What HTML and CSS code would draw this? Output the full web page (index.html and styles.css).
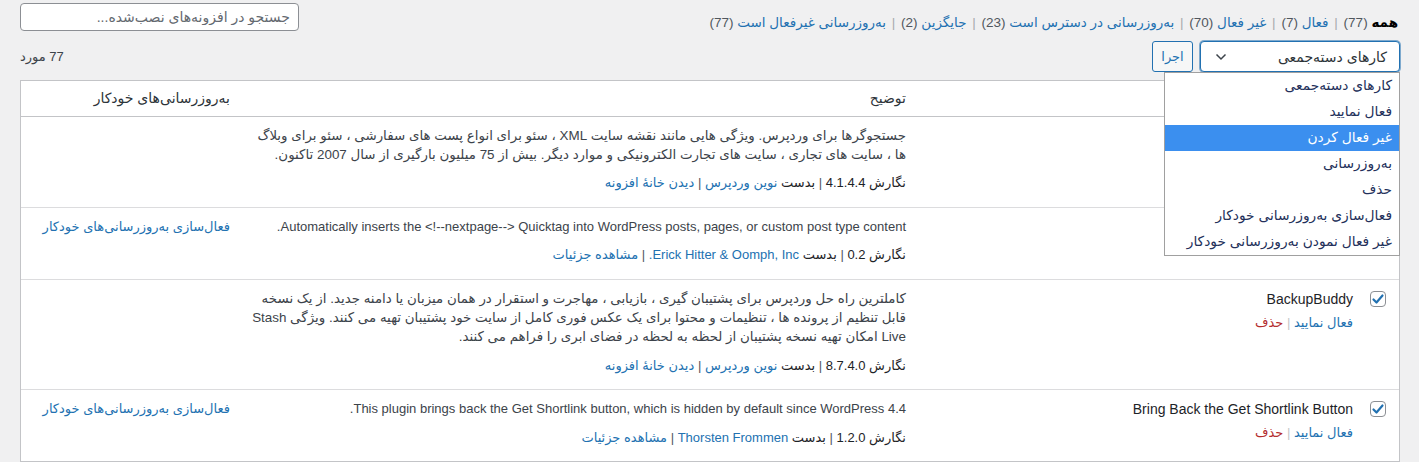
FILE: index.html
```html
<!DOCTYPE html>
<html lang="fa" dir="rtl">
<head>
<meta charset="utf-8">
<title>افزونه‌ها</title>
<link rel="stylesheet" href="styles.css">
</head>
<body>
<div class="wrap">
  <div class="top">
    <ul class="subsubsub">
      <li><span class="current">همه</span> <span class="count">(77)</span> <span class="sep">|</span> </li>
      <li><a href="#">فعال <span class="count">(7)</span></a> <span class="sep">|</span> </li>
      <li><a href="#">غیر فعال <span class="count">(70)</span></a> <span class="sep">|</span> </li>
      <li><a href="#">به‌روزرسانی در دسترس است <span class="count">(23)</span></a> <span class="sep">|</span> </li>
      <li><a href="#">جایگزین <span class="count">(2)</span></a> <span class="sep">|</span> </li>
      <li><a href="#">به‌روزرسانی غیرفعال است <span class="count">(77)</span></a></li>
    </ul>
    <div class="search">
      <input type="search" class="search-input" placeholder="جستجو در افزونه‌های نصب‌شده...">
    </div>
  </div>

  <div class="tablenav">
    <div class="bulk">
      <div class="select">
        <span>کارهای دسته‌جمعی</span>
        <svg class="chev" width="12" height="8" viewBox="0 0 12 8"><polyline points="1.5,1.5 6,6 10.5,1.5" fill="none" stroke="#3c434a" stroke-width="1.5"/></svg>
      </div>
      <button class="apply" type="button">اجرا</button>
      <ul class="menu">
        <li>کارهای دسته‌جمعی</li>
        <li>فعال نمایید</li>
        <li class="hl">غیر فعال کردن</li>
        <li>به‌روزرسانی</li>
        <li>حذف</li>
        <li>فعال‌سازی به‌روزرسانی خودکار</li>
        <li>غیر فعال نمودن به‌روزرسانی خودکار</li>
      </ul>
    </div>
    <div class="num">77 مورد</div>
  </div>

  <table class="plugins">
    <colgroup>
      <col class="c-check">
      <col class="c-name">
      <col class="c-desc">
      <col class="c-auto">
    </colgroup>
    <thead>
      <tr>
        <th class="check"><span class="cb"></span></th>
        <th class="name"></th>
        <th class="desc">توضیح</th>
        <th class="auto">به‌روزرسانی‌های خودکار</th>
      </tr>
    </thead>
    <tbody>
      <tr class="first">
        <td class="check"><span class="cb"></span></td>
        <td class="name"></td>
        <td class="desc">
          <p class="text fa">جستجوگرها برای وردپرس. ویژگی هایی مانند نقشه سایت XML ، سئو برای انواع پست های سفارشی ، سئو برای وبلاگ<br>ها ، سایت های تجاری ، سایت های تجارت الکترونیکی و موارد دیگر. بیش از 75 میلیون بارگیری از سال 2007 تاکنون.</p>
          <div class="meta">نگارش 4.1.4.4 <span class="sep">|</span> بدست <a href="#">نوین وردپرس</a> <span class="sep">|</span> <a href="#">دیدن خانهٔ افزونه</a></div>
        </td>
        <td class="auto"></td>
      </tr>
      <tr>
        <td class="check"><span class="cb"></span></td>
        <td class="name"></td>
        <td class="desc">
          <p class="text">Automatically inserts the &lt;!--nextpage--&gt; Quicktag into WordPress posts, pages, or custom post type content.</p>
          <div class="meta">نگارش 0.2 <span class="sep">|</span> بدست <a href="#">Erick Hitter &amp; Oomph, Inc.</a> <span class="sep">|</span> <a href="#">مشاهده جزئیات</a></div>
        </td>
        <td class="auto"><a href="#">فعال‌سازی به‌روزرسانی‌های خودکار</a></td>
      </tr>
      <tr>
        <td class="check"><span class="cb on"><svg width="14" height="14" viewBox="0 0 14 14"><polyline points="2.5,7.5 5.5,10.5 11.5,3.5" fill="none" stroke="#2271b1" stroke-width="2.2" stroke-linecap="round" stroke-linejoin="round"/></svg></span></td>
        <td class="name">
          <div class="title">BackupBuddy</div>
          <div class="actions"><a href="#">فعال نمایید</a> <span class="sep">|</span> <a href="#" class="del">حذف</a></div>
        </td>
        <td class="desc">
          <p class="text fa">کاملترین راه حل وردپرس برای پشتیبان گیری ، بازیابی ، مهاجرت و استقرار در همان میزبان یا دامنه جدید. از یک نسخه<br>قابل تنظیم از پرونده ها ، تنظیمات و محتوا برای یک عکس فوری کامل از سایت خود پشتیبان تهیه می کنند. ویژگی Stash<br>Live امکان تهیه نسخه پشتیبان از لحظه به لحظه در فضای ابری را فراهم می کنند.</p>
          <div class="meta">نگارش 8.7.4.0 <span class="sep">|</span> بدست <a href="#">نوین وردپرس</a> <span class="sep">|</span> <a href="#">دیدن خانهٔ افزونه</a></div>
        </td>
        <td class="auto"></td>
      </tr>
      <tr>
        <td class="check"><span class="cb on"><svg width="14" height="14" viewBox="0 0 14 14"><polyline points="2.5,7.5 5.5,10.5 11.5,3.5" fill="none" stroke="#2271b1" stroke-width="2.2" stroke-linecap="round" stroke-linejoin="round"/></svg></span></td>
        <td class="name">
          <div class="title">Bring Back the Get Shortlink Button</div>
          <div class="actions"><a href="#">فعال نمایید</a> <span class="sep">|</span> <a href="#" class="del">حذف</a></div>
        </td>
        <td class="desc">
          <p class="text">This plugin brings back the Get Shortlink button, which is hidden by default since WordPress 4.4.</p>
          <div class="meta">نگارش 1.2.0 <span class="sep">|</span> بدست <a href="#">Thorsten Frommen</a> <span class="sep">|</span> <a href="#">مشاهده جزئیات</a></div>
        </td>
        <td class="auto"><a href="#">فعال‌سازی به‌روزرسانی‌های خودکار</a></td>
      </tr>
    </tbody>
  </table>
</div>
</body>
</html>
```

FILE: styles.css
```css
* { box-sizing: border-box; }

html { direction: rtl; }

body {
  margin: 0;
  background: #f0f0f1;
  font-family: "Liberation Sans", "DejaVu Sans", sans-serif;
  font-size: 13px;
  color: #3c434a;
}

a { color: #2271b1; text-decoration: none; }

.wrap { padding: 0 19px 0 20px; }

/* top row */
.top {
  display: flex;
  justify-content: space-between;
  align-items: flex-start;
  height: 34px;
}

.subsubsub {
  list-style: none;
  margin: 0;
  padding: 15px 2px 0 0;
  line-height: 16px;
  font-size: 13.5px;
  white-space: nowrap;
  color: #646970;
}
.subsubsub li { display: inline; }
.subsubsub .current { color: #000; font-weight: 700; }
.subsubsub .count { color: #50575e; }
.subsubsub .sep { color: #a7aaad; margin: 0 2px; }

.search-input {
  display: block;
  margin-top: 3px;
  width: 279px;
  height: 28px;
  border: 1px solid #8c8f94;
  border-radius: 4px;
  background: #fff;
  padding: 0 8px;
  font-family: inherit;
  font-size: 14px;
  color: #2c3338;
  direction: rtl;
}
.search-input::placeholder { color: #646970; }

/* bulk actions */
.tablenav {
  display: flex;
  justify-content: space-between;
  align-items: center;
  margin-top: 7px;
  height: 31px;
}
.bulk { display: flex; gap: 7px; position: relative; }

.select {
  width: 200px;
  height: 31px;
  border: 1px solid #2271b1;
  box-shadow: 0 0 0 1px rgba(34,113,177,.55);
  border-radius: 4px;
  background: #fff;
  display: flex;
  align-items: center;
  justify-content: space-between;
  padding: 0 12px 0 14px;
  font-size: 14px;
  color: #2c3338;
}
.chev { display: block; }

.apply {
  width: 41px;
  height: 31px;
  border: 1px solid #2271b1;
  border-radius: 3px;
  background: #f6f7f7;
  color: #2271b1;
  font-family: inherit;
  font-size: 13px;
  padding: 0;
}

.menu {
  position: absolute;
  top: 31px;
  right: 0;
  width: 236px;
  margin: 0;
  padding: 0;
  list-style: none;
  background: #fff;
  border: 1px solid #a0a0a0;
  z-index: 5;
}
.menu li {
  height: 26px;
  line-height: 26px;
  padding-right: 7px;
  font-size: 13.8px;
  color: #23305a;
  white-space: nowrap;
}
.menu li.hl { background: #3b8fef; color: #fff; }

.num { color: #3c434a; padding-bottom: 1px; }

/* table */
.plugins {
  margin-top: 8px;
  width: 100%;
  table-layout: fixed;
  border-collapse: separate;
  border-spacing: 0;
  border: 1px solid #c3c4c7;
  background: #fff;
}
.c-check { width: 38px; }
.c-name { width: 445px; }
.c-desc { width: 677px; }
.c-auto { width: 218px; }

.plugins th {
  text-align: right;
  font-weight: 400;
  font-size: 14px;
  color: #2c3338;
  padding: 8px 10px;
  line-height: 19px;
  border-bottom: 1px solid #c3c4c7;
}
.plugins th.auto { padding-right: 9px; }
.plugins th.check { padding: 8px 13px 0 0; vertical-align: top; }

.plugins td {
  vertical-align: top;
  padding: 9px 10px 14px;
  line-height: 19.5px;
  border-top: 1px solid #dcdcde;
}
.plugins tr.first td { border-top: 0; }

.plugins td.check { padding: 11px 13px 0 0; }
.plugins td.name { padding: 9px 8px 0 10px; }
.plugins td.auto { padding: 9px 9px 0 10px; }

.cb {
  display: flex;
  align-items: center;
  justify-content: center;
  width: 16px;
  height: 16px;
  border: 1px solid #8c8f94;
  border-radius: 4px;
  background: #fff;
}

.title {
  font-size: 14px;
  line-height: 20px;
  color: #1d2327;
  white-space: nowrap;
}
.actions { margin-top: 4px; line-height: 19px; color: #a7aaad; }
.actions .del { color: #b32d2e; }
.actions .sep { color: #c3c4c7; }

.text {
  margin: 0;
  white-space: nowrap;
  color: #3c434a;
}
.text.fa { font-size: 13.4px; line-height: 19.2px; }
.meta { margin-top: 9px; color: #1d2327; white-space: nowrap; }
.meta .sep { color: #50575e; }
```
